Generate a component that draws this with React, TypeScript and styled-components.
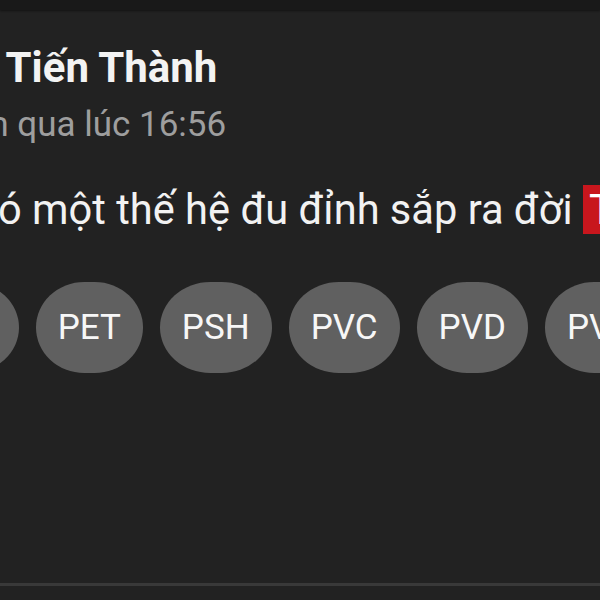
import React from "react";
import styled, { createGlobalStyle } from "styled-components";

const GlobalStyle = createGlobalStyle`
  html, body {
    margin: 0;
    padding: 0;
    background: #222222;
  }
  body {
    font-family: Roboto, "Noto Sans", "Liberation Sans", sans-serif;
    -webkit-font-smoothing: antialiased;
  }
`;

const Screen = styled.div`
  width: 600px;
  height: 600px;
  overflow: hidden;
  background: #222222;
  display: flex;
  flex-direction: column;
`;

const TopBar = styled.div`
  height: 10px;
  flex: 0 0 auto;
  background: #191919;
  box-shadow: 0 1px 2px rgba(0, 0, 0, 0.45);
`;

const Post = styled.article`
  flex: 1 1 auto;
  display: flex;
  flex-direction: column;
  padding-top: 33px;
  overflow: hidden;
`;

const Author = styled.div`
  margin-left: -148px;
  font-size: 42px;
  line-height: 50px;
  font-weight: 700;
  color: #f3f3f3;
  white-space: nowrap;
`;

const Meta = styled.div`
  margin-top: 11px;
  margin-left: -67px;
  font-size: 35px;
  line-height: 41px;
  color: #9e9e9e;
  white-space: nowrap;
`;

const Body = styled.p`
  margin: 41px 0 0 -29px;
  font-size: 41.6px;
  line-height: 48px;
  color: #f2f2f2;
  white-space: nowrap;
`;

const Highlight = styled.span`
  background: #c8161d;
  color: #ffffff;
  padding: 0 6px;
`;

const Tags = styled.div`
  margin-top: 48px;
  margin-left: -92px;
  display: flex;
  gap: 17px;
`;

const Tag = styled.span`
  flex: 0 0 auto;
  height: 91px;
  padding: 0 22px;
  display: flex;
  align-items: center;
  justify-content: center;
  border-radius: 45% / 50%;
  background: #606060;
  color: #f7f7f7;
  font-size: 35px;
  white-space: nowrap;
`;

const Spacer = styled.div`
  flex: 1 1 auto;
`;

const Divider = styled.div`
  flex: 0 0 auto;
  height: 3px;
  margin-bottom: 14px;
  background: #393939;
`;

const tags = ["PDR", "PET", "PSH", "PVC", "PVD", "PVS"];

export default function App() {
  return (
    <>
      <GlobalStyle />
      <Screen>
        <TopBar />
        <Post>
          <Author>Nguyễn Tiến Thành</Author>
          <Meta>Hôm qua lúc 16:56</Meta>
          <Body>
            Có một thế hệ đu đỉnh sắp ra đời <Highlight>TOP</Highlight>
          </Body>
          <Tags>
            {tags.map((t) => (
              <Tag key={t}>{t}</Tag>
            ))}
          </Tags>
          <Spacer />
          <Divider />
        </Post>
      </Screen>
    </>
  );
}
